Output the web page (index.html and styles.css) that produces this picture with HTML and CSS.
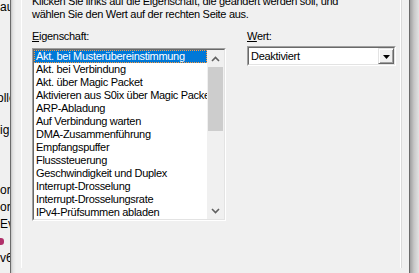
FILE: index.html
```html
<!DOCTYPE html>
<html lang="de">
<head>
<meta charset="utf-8">
<title>Erweitert</title>
<link rel="stylesheet" href="styles.css">
</head>
<body>
<div class="screen">
  <div class="behind">
    <div class="b-row b-first">au</div>
    <div class="b-row b-olle">olle</div>
    <div class="b-row b-ig">ig</div>
    <div class="b-row b-or">or</div>
    <div class="b-row">or</div>
    <div class="b-row">Ev</div>
    <div class="b-row"><span class="b-icon"></span></div>
    <div class="b-row">v6</div>
  </div>
  <div class="edge-l"></div>
  <div class="dialog">
    <div class="page">
      <p class="intro">Klicken Sie links auf die Eigenschaft, die geändert werden soll, und<br>wählen Sie den Wert auf der rechten Seite aus.</p>
      <div class="fields">
        <div class="col-left">
          <div class="label"><u>E</u>igenschaft:</div>
          <div class="listbox">
            <div class="listbox-in">
              <ul class="items">
                <li class="item selected">Akt. bei Musterübereinstimmung</li>
                <li class="item">Akt. bei Verbindung</li>
                <li class="item">Akt. über Magic Packet</li>
                <li class="item">Aktivieren aus S0ix über Magic Packet</li>
                <li class="item">ARP-Abladung</li>
                <li class="item">Auf Verbindung warten</li>
                <li class="item">DMA-Zusammenführung</li>
                <li class="item">Empfangspuffer</li>
                <li class="item">Flusssteuerung</li>
                <li class="item">Geschwindigkeit und Duplex</li>
                <li class="item">Interrupt-Drosselung</li>
                <li class="item">Interrupt-Drosselungsrate</li>
                <li class="item">IPv4-Prüfsummen abladen</li>
              </ul>
              <div class="sb">
                <div class="sb-btn"><svg width="9" height="6" viewBox="0 0 9 6"><polyline points="1,5 4.5,1.5 8,5" fill="none" stroke="#606060" stroke-width="1.6"/></svg></div>
                <div class="sb-track"><div class="sb-thumb"></div></div>
                <div class="sb-btn"><svg width="9" height="6" viewBox="0 0 9 6"><polyline points="1,1 4.5,4.5 8,1" fill="none" stroke="#606060" stroke-width="1.6"/></svg></div>
              </div>
            </div>
          </div>
        </div>
        <div class="col-right">
          <div class="label"><u>W</u>ert:</div>
          <div class="combo">
            <div class="combo-in">
              <div class="combo-text">Deaktiviert</div>
              <div class="combo-btn"><svg width="7" height="4" viewBox="0 0 7 4"><polygon points="0,0 7,0 3.5,4" fill="#000"/></svg></div>
            </div>
          </div>
        </div>
      </div>
    </div>
  </div>
  <div class="edge-r"></div>
  <div class="shadow-r"></div>
</div>
</body>
</html>
```
FILE: styles.css
```css
html, body {
  margin: 0;
  padding: 0;
}
body {
  width: 419px;
  height: 273px;
  overflow: hidden;
  background: #f0f0f0;
  font: 11px "Liberation Sans", Arial, sans-serif;
  color: #000;
}
.screen {
  display: flex;
  height: 273px;
}
.behind {
  width: 10px;
  flex: none;
  overflow: hidden;
  white-space: nowrap;
  font-size: 12px;
  line-height: 17px;
  background: #f0f0f0;
}
.b-row {
  height: 17px;
}
.b-first { margin-top: -1px; }
.b-olle { margin-top: 74px; margin-left: -3px; }
.b-ig { margin-top: 15px; }
.b-or { margin-top: 43px; }
.b-icon {
  display: inline-block;
  width: 4px;
  height: 7px;
  margin-top: 5px;
  background: #b0306a;
  border-radius: 0 3px 3px 0;
  vertical-align: top;
}
.edge-l {
  width: 1px;
  flex: none;
  background: #6a6a6a;
}
.dialog {
  width: 398px;
  flex: none;
  box-sizing: border-box;
  padding: 0 7px 0 10px;
  background: linear-gradient(to right, #c4c4c4 0, #e4e4e4 2px, #f0f0f0 5px);
}
.page {
  width: 381px;
  height: 273px;
  box-sizing: border-box;
  border-left: 1px solid #fff;
  border-right: 1px solid #dadada;
  box-shadow: inset -1px 0 #fff;
  background: #f0f0f0;
  padding-left: 10px;
  letter-spacing: -0.3px;
}
.intro {
  margin: -5px 0 0 0;
  line-height: 13px;
  white-space: nowrap;
}
.fields {
  display: flex;
  gap: 21px;
  margin-top: 9px;
}
.col-left { width: 194px; }
.col-right { width: 149px; }
.label {
  height: 13px;
  line-height: 13px;
}
.listbox {
  margin-top: 5px;
  height: 173px;
  box-sizing: border-box;
  border: 1px solid;
  border-color: #a0a0a0 #fff #fff #a0a0a0;
}
.listbox-in {
  height: 100%;
  box-sizing: border-box;
  border: 1px solid;
  border-color: #696969 #e3e3e3 #e3e3e3 #696969;
  background: #fff;
  display: flex;
}
.items {
  flex: 1;
  margin: 0;
  padding: 0;
  list-style: none;
  overflow: hidden;
}
.item {
  height: 13px;
  line-height: 13px;
  padding-left: 2px;
  white-space: nowrap;
  overflow: hidden;
}
.item.selected {
  background: #0078d7;
  color: #fff;
  outline: 1px dotted #ff9a3c;
  outline-offset: -1px;
}
.sb {
  width: 17px;
  flex: none;
  display: flex;
  flex-direction: column;
  background: #f0f0f0;
}
.sb-btn {
  height: 17px;
  display: flex;
  align-items: center;
  justify-content: center;
}
.sb-track {
  flex: 1;
}
.sb-thumb {
  height: 64px;
  margin: 0 1px;
  background: #cdcdcd;
}
.combo {
  margin-top: 3px;
  height: 20px;
  box-sizing: border-box;
  border: 1px solid;
  border-color: #a0a0a0 #fff #fff #a0a0a0;
}
.combo-in {
  height: 100%;
  box-sizing: border-box;
  border: 1px solid;
  border-color: #696969 #e3e3e3 #e3e3e3 #696969;
  background: #fff;
  display: flex;
}
.combo-text {
  flex: 1;
  padding: 2px 2px 0;
  line-height: 13px;
}
.combo-btn {
  width: 16px;
  height: 16px;
  box-sizing: border-box;
  border: 1px solid;
  border-color: #e3e3e3 #696969 #696969 #e3e3e3;
  box-shadow: inset 1px 1px #fff, inset -1px -1px #a0a0a0;
  background: #f0f0f0;
  display: flex;
  align-items: center;
  justify-content: center;
  padding-top: 1px;
}
.edge-r {
  width: 1px;
  flex: none;
  background: #6a6a6a;
}
.shadow-r {
  width: 9px;
  flex: none;
  background: linear-gradient(to right, #9e9e9e, #c8c8c8 4px, #e2e2e2);
}
```
